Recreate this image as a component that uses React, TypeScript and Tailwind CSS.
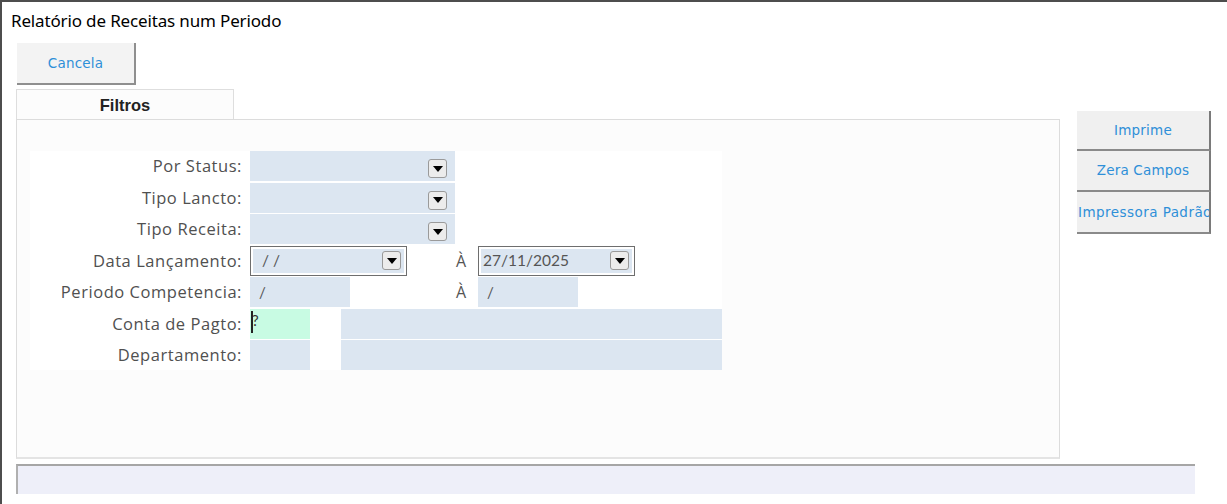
import React from "react";

const Arrow = () => (
  <div className="flex h-[19px] w-[19px] items-center justify-center rounded-[3px] border border-[#9a9a9a] bg-[#ececec]">
    <svg width="10" height="6" viewBox="0 0 10 6"><path d="M0 0h10L5 6z" fill="#000" /></svg>
  </div>
);

const Combo = () => (
  <div className="flex h-full w-[205px] items-end justify-end bg-[#dce6f1] pb-[3px] pr-[8px]">
    <Arrow />
  </div>
);

const DateCombo = ({ text, pad }: { text: string; pad: string }) => (
  <div className="flex h-full w-[157px] items-center border border-[#6e6e6e] p-px">
    <div className={`flex h-full flex-1 items-center justify-between border border-white bg-[#dce6f1] pr-[3px] ${pad}`}>
      <span className="text-[15.5px] text-[#555]">{text}</span>
      <Arrow />
    </div>
  </div>
);

const Label = ({ children }: { children: React.ReactNode }) => (
  <div className="flex w-[212px] items-center justify-end whitespace-nowrap pt-[1px] text-[16.5px] tracking-[0.55px] text-[#505050] [font-family:'Open_Sans',sans-serif]">{children}</div>
);

const Row = ({ label, children }: { label: string; children: React.ReactNode }) => (
  <div className="flex h-[30px] gap-[8px]">
    <Label>{label}:</Label>
    <div className="flex h-full items-stretch">{children}</div>
  </div>
);

const SideBtn = ({ children, h, start }: { children: React.ReactNode; h: string; start?: boolean }) => (
  <div className={`flex ${h} w-[134px] items-center ${start ? "justify-start pl-[1px] tracking-[0.45px]" : "justify-center tracking-[0.2px]"} overflow-hidden whitespace-nowrap border-b-2 border-r-2 border-b-[#8a8a8a] border-r-[#7a7a7a] bg-[#f0f0f0] text-[13.5px] text-[#2e8fd8] [font-family:'DejaVu_Sans',sans-serif]`}>
    {children}
  </div>
);

export default function App() {
  return (
    <div className="flex h-[504px] w-[1227px] flex-col overflow-hidden border-l-2 border-t-2 border-[#4d4d4d] bg-white [font-family:Lato,sans-serif]">
      <div className="h-[38px] pl-[9px] pt-[6px] text-[17px] text-black [font-family:'Noto_Sans',sans-serif] tracking-[-0.15px]">
        Relatório de Receitas num Periodo
      </div>
      <div className="ml-[15px] mt-[3px] flex h-[42px] w-[119px] items-center justify-center border-b-2 border-r-2 border-b-[#8f8f8f] border-r-[#8f8f8f] bg-[#f3f3f3] text-[13.5px] text-[#2e8fd8] [font-family:'DejaVu_Sans',sans-serif] tracking-[0.2px]">
        Cancela
      </div>
      <div className="ml-[14px] mt-[4px] flex gap-[17px]">
        <div className="flex w-[1044px] flex-col">
          <div className="flex h-[30px] w-[218px] items-center justify-center border border-b-0 border-[#dedede] bg-[#fcfcfc] pt-[2px] text-[16.5px] font-bold text-[#222] [font-family:'Liberation_Sans',sans-serif]">
            Filtros
          </div>
          <div className="h-[340px] border border-b-2 border-[#dcdcdc] border-b-[#e4e4e4] bg-[#fcfcfc] pl-[13px] pt-[31px]">
            <div className="flex w-[692px] flex-col gap-[1.5px] bg-white">
              <Row label="Por Status"><Combo /></Row>
              <Row label="Tipo Lancto"><Combo /></Row>
              <Row label="Tipo Receita"><Combo /></Row>
              <Row label="Data Lançamento">
                <DateCombo text="/  /" pad="pl-[9px]" />
                <div className="flex w-[71px] items-center pl-[49px] text-[16px] text-[#555] [font-family:'Open_Sans',sans-serif]">À</div>
                <DateCombo text="27/11/2025" pad="pl-[2px]" />
              </Row>
              <Row label="Periodo Competencia">
                <div className="flex w-[100px] items-center bg-[#dce6f1] pl-[9px] text-[15px] text-[#555]">/</div>
                <div className="flex w-[128px] items-center pl-[106px] text-[16px] text-[#555] [font-family:'Open_Sans',sans-serif]">À</div>
                <div className="flex w-[100px] items-center bg-[#dce6f1] pl-[9px] text-[15px] text-[#555]">/</div>
              </Row>
              <Row label="Conta de Pagto">
                <div className="flex w-[60px] items-center bg-[#c8fbe3] text-[15px] text-[#333]">
                  <span className="ml-px mt-[2px] h-[22px] w-[2px] self-start bg-[#222]" />
                  <span className="-ml-px self-start">?</span>
                </div>
                <div className="w-[31px]" />
                <div className="w-[381px] bg-[#dce6f1]" />
              </Row>
              <Row label="Departamento">
                <div className="w-[60px] bg-[#dce6f1]" />
                <div className="w-[31px]" />
                <div className="w-[381px] bg-[#dce6f1]" />
              </Row>
            </div>
          </div>
        </div>
        <div className="mt-[22px] flex flex-col">
          <SideBtn h="h-[40px]">Imprime</SideBtn>
          <SideBtn h="h-[41px]">Zera Campos</SideBtn>
          <SideBtn h="h-[42px]" start>Impressora Padrão</SideBtn>
        </div>
      </div>
      <div className="ml-[14px] mt-[5px] h-[30px] w-[1179px] border-l-2 border-t-2 border-l-[#b0b0b0] border-t-[#a6a6a6] bg-[#eeeff9]" />
    </div>
  );
}
